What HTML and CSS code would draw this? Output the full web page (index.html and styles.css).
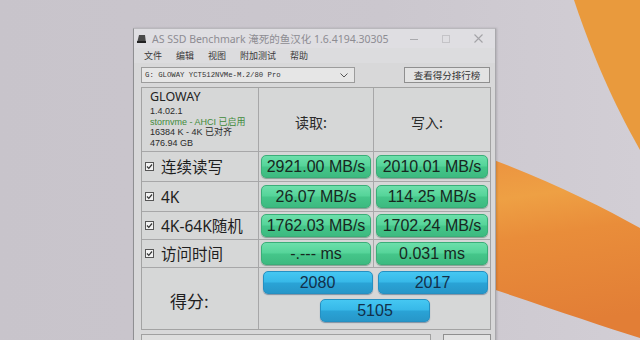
FILE: index.html
```html
<!DOCTYPE html>
<html lang="zh">
<head>
<meta charset="utf-8">
<title>AS SSD Benchmark</title>
<link rel="stylesheet" href="styles.css">
</head>
<body>
<svg class="wallpaper" width="640" height="340" viewBox="0 0 640 340" aria-hidden="true">
  <defs>
    <linearGradient id="band" x1="0" y1="0" x2="0.15" y2="1">
      <stop offset="0" stop-color="#ea8a3c"/>
      <stop offset="0.35" stop-color="#eea044"/>
      <stop offset="0.55" stop-color="#e98d3a"/>
      <stop offset="1" stop-color="#e27e36"/>
    </linearGradient>
  </defs>
  <path d="M574,0 L640,0 L640,150 C622,118 598,72 574,0 Z" fill="#e99a3d"/>
  <path d="M430,138 C520,166 590,200 640,228 L640,338 C590,322 520,298 430,268 Z" fill="url(#band)"/>
</svg>

<div class="window">
  <div class="titlebar">
    <svg class="app-icon" width="9" height="8" viewBox="0 0 9 8"><path d="M2,0 L8,0 L9,8 L0,8 Z" fill="#4a4a4a"/><rect x="0" y="6" width="9" height="2" fill="#222"/></svg>
    <span class="title">AS SSD Benchmark 淹死的鱼汉化 1.6.4194.30305</span>
    <div class="controls">
      <svg width="8" height="8" viewBox="0 0 8 8"><line x1="0" y1="4.5" x2="8" y2="4.5" stroke="#a9a9ad" stroke-width="1"/></svg>
      <svg width="8" height="8" viewBox="0 0 8 8"><rect x="0.5" y="0.5" width="7" height="7" fill="none" stroke="#c4c3c7" stroke-width="1"/></svg>
      <svg width="9" height="9" viewBox="0 0 9 9"><path d="M0.5,0.5 L8.5,8.5 M8.5,0.5 L0.5,8.5" stroke="#a4a3a8" stroke-width="1.1"/></svg>
    </div>
  </div>

  <div class="menubar">
    <span>文件</span><span>编辑</span><span>视图</span><span>附加测试</span><span>帮助</span>
  </div>

  <div class="toolbar">
    <div class="select">
      <span>G: GLOWAY YCT512NVMe-M.2/80 Pro</span>
      <svg width="8" height="5" viewBox="0 0 8 5"><path d="M0.5,0.5 L4,4 L7.5,0.5" fill="none" stroke="#555" stroke-width="1"/></svg>
    </div>
    <div class="rank-btn">查看得分排行榜</div>
  </div>

  <div class="grid">
    <div class="info">
      <div class="drive">GLOWAY</div>
      <div class="line">1.4.02.1</div>
      <div class="line ok">stornvme - AHCI 已启用</div>
      <div class="line">16384 K - 4K 已对齐</div>
      <div class="line">476.94 GB</div>
    </div>
    <div class="head">读取:</div>
    <div class="head">写入:</div>

    <div class="label"><svg class="check" width="9" height="9" viewBox="0 0 9 9"><rect x="0.5" y="0.5" width="8" height="8" fill="#f2f2f2" stroke="#555"/><path d="M2,4.5 L3.8,6.3 L7,2.5" fill="none" stroke="#333" stroke-width="1.2"/></svg>连续读写</div>
    <div class="cell"><div class="pill">2921.00 MB/s</div></div>
    <div class="cell"><div class="pill">2010.01 MB/s</div></div>

    <div class="label"><svg class="check" width="9" height="9" viewBox="0 0 9 9"><rect x="0.5" y="0.5" width="8" height="8" fill="#f2f2f2" stroke="#555"/><path d="M2,4.5 L3.8,6.3 L7,2.5" fill="none" stroke="#333" stroke-width="1.2"/></svg>4K</div>
    <div class="cell"><div class="pill">26.07 MB/s</div></div>
    <div class="cell"><div class="pill">114.25 MB/s</div></div>

    <div class="label"><svg class="check" width="9" height="9" viewBox="0 0 9 9"><rect x="0.5" y="0.5" width="8" height="8" fill="#f2f2f2" stroke="#555"/><path d="M2,4.5 L3.8,6.3 L7,2.5" fill="none" stroke="#333" stroke-width="1.2"/></svg>4K-64K随机</div>
    <div class="cell"><div class="pill">1762.03 MB/s</div></div>
    <div class="cell"><div class="pill">1702.24 MB/s</div></div>

    <div class="label"><svg class="check" width="9" height="9" viewBox="0 0 9 9"><rect x="0.5" y="0.5" width="8" height="8" fill="#f2f2f2" stroke="#555"/><path d="M2,4.5 L3.8,6.3 L7,2.5" fill="none" stroke="#333" stroke-width="1.2"/></svg>访问时间</div>
    <div class="cell"><div class="pill">-.--- ms</div></div>
    <div class="cell"><div class="pill">0.031 ms</div></div>

    <div class="score-label">得分:</div>
    <div class="score">
      <div class="score-row">
        <div class="pill blue">2080</div>
        <div class="pill blue">2017</div>
      </div>
      <div class="score-row">
        <div class="pill blue">5105</div>
      </div>
    </div>
  </div>

  <div class="bottom">
    <div class="progress"></div>
    <div class="start-btn"></div>
  </div>
</div>
</body>
</html>
```

FILE: styles.css
```css
* { box-sizing: border-box; }

html, body {
  margin: 0;
  padding: 0;
}

body {
  width: 640px;
  height: 340px;
  overflow: hidden;
  position: relative;
  background: linear-gradient(90deg, #c8c4cb 0%, #cbc7ce 60%, #d2ced5 100%);
  font-family: "Noto Sans", "Noto Sans CJK SC", sans-serif;
  color: #222;
}

.wallpaper {
  position: absolute;
  left: 0;
  top: 0;
}

.window {
  position: relative;
  margin: 28px 0 0 133px;
  width: 363px;
  height: 320px;
  background: #d8d8d9;
  border-left: 1px solid #8f8f92;
  border-top: 1px solid #b9b8bc;
  border-right: 1px solid #a9a8ac;
  box-shadow: 1px 0 2px rgba(0,0,0,0.15);
}

.titlebar {
  height: 19px;
  display: flex;
  align-items: center;
  padding-left: 3px;
  background: #dfdee2;
}

.app-icon { margin-right: 6px; }

.title {
  font-family: "Noto Sans", "Noto Sans CJK SC", sans-serif;
  font-size: 10.5px;
  color: #8d8c92;
  white-space: nowrap;
}

.controls {
  margin-left: auto;
  display: flex;
  align-items: center;
  gap: 24px;
  padding-right: 12px;
}

.menubar {
  height: 15px;
  display: flex;
  align-items: center;
  gap: 14px;
  padding-left: 10px;
  font-family: "Noto Sans CJK SC", sans-serif;
  font-size: 9px;
  color: #3a3a3a;
  background: #dcdcde;
}

.toolbar {
  height: 24px;
  display: flex;
  align-items: flex-start;
  padding: 4px 0 0 7px;
}

.select {
  width: 214px;
  height: 16px;
  border: 1px solid #9c9c9c;
  background: #e6e6e6;
  display: flex;
  align-items: center;
  justify-content: space-between;
  padding: 0 6px 0 3px;
  font-family: "Liberation Mono", "DejaVu Sans Mono", monospace;
  font-size: 7.3px;
  color: #333;
}

.rank-btn {
  margin-left: 49px;
  width: 86px;
  height: 16px;
  border: 1px solid #8f8f8f;
  background: #e3e3e3;
  font-family: "Noto Sans CJK SC", sans-serif;
  font-size: 9.5px;
  color: #333;
  display: flex;
  align-items: center;
  justify-content: center;
}

.grid {
  margin-left: 7px;
  width: 350px;
  display: grid;
  grid-template-columns: 116px 114px 116px;
  grid-template-rows: 63px 29px 29px 27px 27px 61px;
  gap: 1px;
  border: 1px solid #a3a3a3;
  background: #a7a7a8;
}

.grid > div { background: #d6d7d7; }

.info {
  padding: 2px 0 0 8px;
  font-family: "Liberation Sans", "Noto Sans CJK SC", sans-serif;
  color: #2a2a2a;
}

.info .drive {
  font-family: "Noto Sans", "Noto Sans CJK SC", sans-serif;
  font-size: 12.5px;
  line-height: 14px;
  height: 16px;
  color: #222;
}

.info .line {
  font-size: 9px;
  line-height: 10.5px;
  height: 10.5px;
  white-space: nowrap;
}

.info .ok { color: #3f8a3a; }

.head {
  display: flex;
  align-items: center;
  justify-content: center;
  padding: 4px 10px 0 0;
  font-family: "Noto Sans CJK SC", sans-serif;
  font-size: 14px;
  color: #2a2a2a;
}

.label {
  display: flex;
  align-items: center;
  padding-left: 3px;
  font-family: "Noto Sans", "Noto Sans CJK SC", sans-serif;
  font-size: 15.5px;
  color: #1e1e1e;
}

.check { margin-right: 7px; flex: none; }

.cell {
  display: flex;
  align-items: center;
  padding: 0 2px 0 2px;
}

.pill {
  flex: 1;
  height: 23px;
  border-radius: 5px;
  display: flex;
  align-items: center;
  justify-content: center;
  font-family: "Liberation Sans", Arial, sans-serif;
  font-size: 16px;
  color: #17281f;
  background: linear-gradient(180deg, #6ddfab 0%, #55d499 48%, #45c68a 52%, #3dba80 100%);
  border: 1px solid #3aae78;
  box-shadow: 0 1px 1px rgba(30, 90, 60, 0.45);
}

.score-label {
  display: flex;
  align-items: center;
  padding: 4px 0 0 28px;
  font-family: "Noto Sans CJK SC", sans-serif;
  font-size: 17px;
  color: #1e1e1e;
}

.score {
  grid-column: 2 / span 2;
  display: flex;
  flex-direction: column;
  gap: 5px;
  padding: 3px 3px 0 4px;
}

.score-row {
  display: flex;
  justify-content: center;
  gap: 5px;
}

.pill.blue {
  flex: none;
  width: 110px;
  height: 23px;
  color: #12304a;
  background: linear-gradient(180deg, #45c7f2 0%, #37b8e8 48%, #2aa3d6 52%, #2797c9 100%);
  border: 1px solid #2590c2;
  box-shadow: 0 1px 1px rgba(20, 60, 100, 0.45);
}

.bottom {
  display: flex;
  align-items: flex-start;
  padding: 4px 0 0 7px;
}

.progress {
  width: 290px;
  height: 14px;
  border: 1px solid #a0a0a0;
  background: #dedede;
}

.start-btn {
  margin-left: 12px;
  width: 48px;
  height: 20px;
  border: 1px solid #8f8f8f;
  background: #e3e3e3;
}
```
